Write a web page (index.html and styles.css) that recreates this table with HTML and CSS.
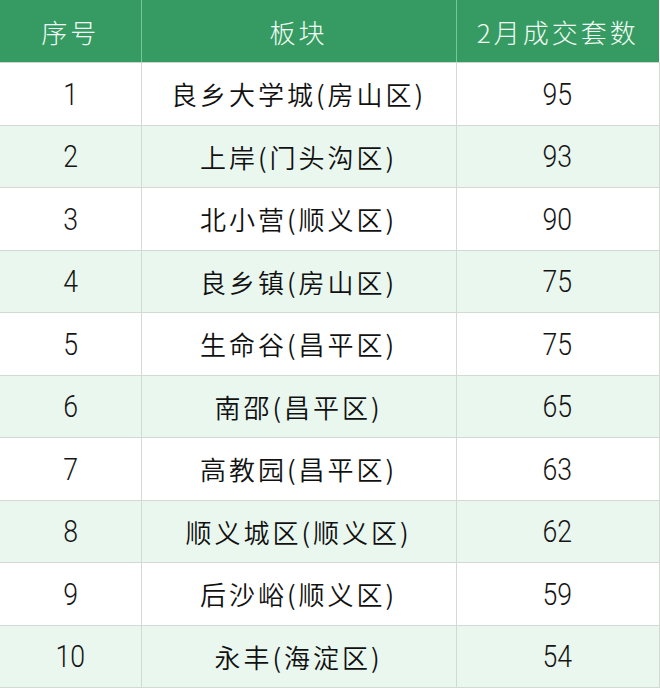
FILE: index.html
```html
<!DOCTYPE html>
<html lang="zh">
<head>
<meta charset="utf-8">
<link rel="stylesheet" href="styles.css">
</head>
<body>
<table class="tbl">
  <colgroup><col class="c1"><col class="c2"><col class="c3"></colgroup>
  <thead>
    <tr><th>序号</th><th>板块</th><th>2月成交套数</th></tr>
  </thead>
  <tbody>
    <tr><td><span class="num">1</span></td><td>良乡大学城(房山区)</td><td><span class="num">95</span></td></tr>
    <tr><td><span class="num">2</span></td><td>上岸(门头沟区)</td><td><span class="num">93</span></td></tr>
    <tr><td><span class="num">3</span></td><td>北小营(顺义区)</td><td><span class="num">90</span></td></tr>
    <tr><td><span class="num">4</span></td><td>良乡镇(房山区)</td><td><span class="num">75</span></td></tr>
    <tr><td><span class="num">5</span></td><td>生命谷(昌平区)</td><td><span class="num">75</span></td></tr>
    <tr><td><span class="num">6</span></td><td>南邵(昌平区)</td><td><span class="num">65</span></td></tr>
    <tr><td><span class="num">7</span></td><td>高教园(昌平区)</td><td><span class="num">63</span></td></tr>
    <tr><td><span class="num">8</span></td><td>顺义城区(顺义区)</td><td><span class="num">62</span></td></tr>
    <tr><td><span class="num">9</span></td><td>后沙峪(顺义区)</td><td><span class="num">59</span></td></tr>
    <tr><td><span class="num">10</span></td><td>永丰(海淀区)</td><td><span class="num">54</span></td></tr>
  </tbody>
</table>
</body>
</html>
```
FILE: styles.css
```css
html, body {
  margin: 0;
  padding: 0;
  background: #ffffff;
}
.tbl {
  width: 659px;
  border-collapse: collapse;
  table-layout: fixed;
  font-family: "Noto Sans CJK SC", "Noto Sans", sans-serif;
}
.c1 { width: 141px; }
.c2 { width: 315px; }
.c3 { width: 203px; }
.tbl th {
  background: #369b63;
  color: #f2fbf4;
  font-weight: 300;
  font-size: 26px;
  letter-spacing: 3px;
  height: 62px;
  padding: 0;
  text-align: center;
  border-left: 1px solid #7cc49a;
  border-bottom: 1px solid #c9d6cc;
}
.tbl th:first-child { border-left: none; }
.tbl td {
  height: 61.5px;
  padding: 0;
  text-align: center;
  font-size: 26px;
  font-weight: 350;
  letter-spacing: 3px;
  color: #111111;
  border: 1px solid #d3dad4;
}
.tbl td:first-child { border-left: none; }
.tbl tbody tr:nth-child(even) td { background: #eaf7ef; }
.num {
  display: inline-block;
  font-family: Roboto, "Noto Sans", sans-serif;
  font-size: 31px;
  font-weight: 300;
  letter-spacing: 0;
  transform: scaleX(0.86);
  color: #151515;
}
```
